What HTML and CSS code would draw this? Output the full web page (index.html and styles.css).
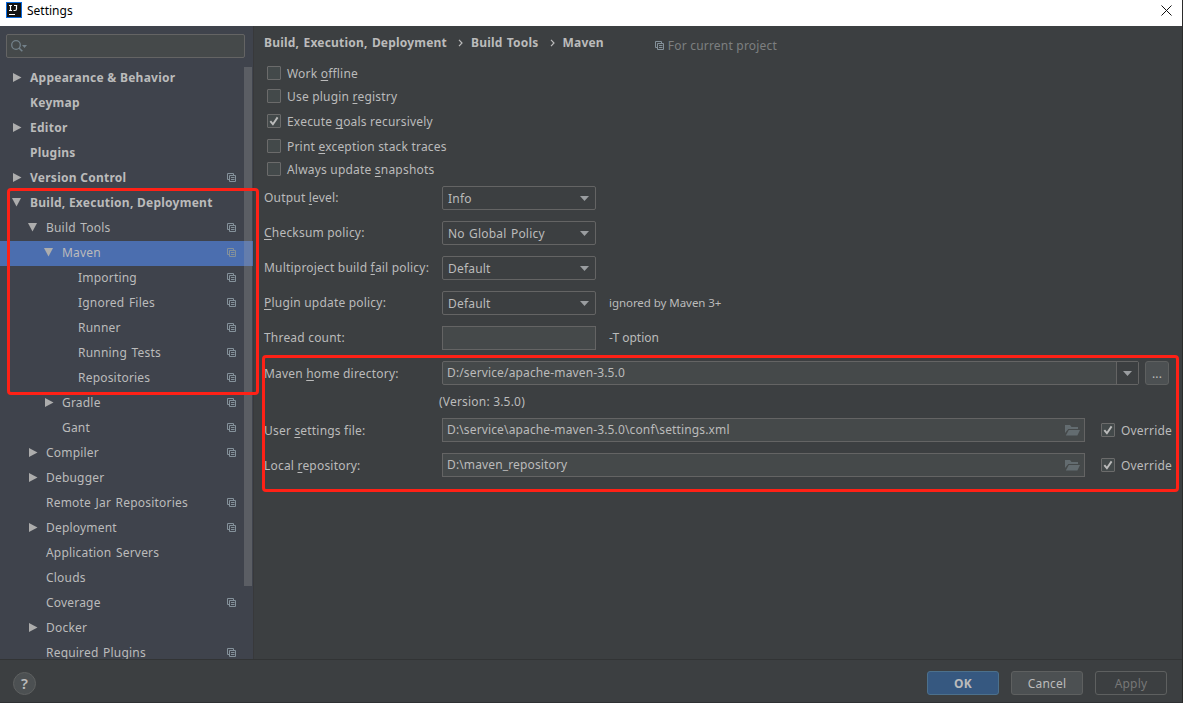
FILE: index.html
```html
<!DOCTYPE html>
<html lang="en">
<head>
<meta charset="utf-8">
<title>Settings</title>
<link rel="stylesheet" href="styles.css">
</head>
<body>
<svg class="defs" width="0" height="0">
  <symbol id="copy" viewBox="0 0 10 10"><path d="M2 6.500H.5V.5h6V2M2.500 2.500h6v6h-6zM4 4.500h3.500M4 6.500h3.500" fill="none" stroke="currentColor"/></symbol>
  <symbol id="right" viewBox="0 0 9 9"><path d="M0 0 8.5 4.5 0 9z" fill="currentColor"/></symbol>
  <symbol id="down" viewBox="0 0 9 9"><path d="M0 0H9L4.5 8.5z" fill="currentColor"/></symbol>
  <symbol id="drop" viewBox="0 0 9 5"><path d="M0 0H9L4.5 5z" fill="currentColor"/></symbol>
  <symbol id="check" viewBox="0 0 14 14"><path d="M3.3 7.2 5.9 10.2 10.6 3.4" fill="none" stroke="currentColor" stroke-width="1.9"/></symbol>
  <symbol id="folder" viewBox="0 0 15 12"><path d="M0 9V1h5l1.500 2H13v2H3.300z" fill="currentColor"/><path d="M3.800 6H15l-2.600 5.500H.8z" fill="currentColor"/></symbol>
</svg>
<div class="window">
  <header class="titlebar">
    <svg class="logo" width="16" height="16" viewBox="0 0 16 16"><rect x=".5" y=".5" width="15" height="15" fill="#111" stroke="#0a6be0"/><path d="M3 3.500h3M4.500 3.500v5M3 8.500h3M8 3.500h3.200M10.500 3.500v3.500q0 1.500-1.500 1.500H7.500M3 12.500h6" fill="none" stroke="#fff" stroke-width="1.200"/></svg>
    <span class="title">Settings</span>
    <svg class="close" width="11" height="11" viewBox="0 0 11 11"><path d="M.5.5l10 10M10.500.5l-10 10" stroke="#111" fill="none"/></svg>
  </header>
  <div class="body">
    <aside class="sidebar">
      <div class="search"><svg width="17" height="14" viewBox="0 0 17 14"><circle cx="5" cy="5" r="4.300" fill="none" stroke="#73818a" stroke-width="1.300"/><path d="M8 8l3.300 3.300" stroke="#73818a" stroke-width="1.600"/><path d="M11 5h5l-2.500 3z" fill="#73818a"/></svg></div>
      <nav class="tree">
        <div class="node top"><svg class="arrow"><use href="#right"/></svg><span>Appearance &amp; Behavior</span></div>
        <div class="node top"><i class="arrow"></i><span>Keymap</span></div>
        <div class="node top"><svg class="arrow"><use href="#right"/></svg><span>Editor</span></div>
        <div class="node top"><i class="arrow"></i><span>Plugins</span></div>
        <div class="node top"><svg class="arrow"><use href="#right"/></svg><span>Version Control</span><svg class="copy"><use href="#copy"/></svg></div>
        <div class="node top"><svg class="arrow open"><use href="#down"/></svg><span>Build, Execution, Deployment</span></div>
        <div class="node l1"><svg class="arrow open"><use href="#down"/></svg><span>Build Tools</span><svg class="copy"><use href="#copy"/></svg></div>
        <div class="node l2 selected"><svg class="arrow open"><use href="#down"/></svg><span>Maven</span><svg class="copy"><use href="#copy"/></svg></div>
        <div class="node l3"><i class="arrow"></i><span>Importing</span><svg class="copy"><use href="#copy"/></svg></div>
        <div class="node l3"><i class="arrow"></i><span>Ignored Files</span><svg class="copy"><use href="#copy"/></svg></div>
        <div class="node l3"><i class="arrow"></i><span>Runner</span><svg class="copy"><use href="#copy"/></svg></div>
        <div class="node l3"><i class="arrow"></i><span>Running Tests</span><svg class="copy"><use href="#copy"/></svg></div>
        <div class="node l3"><i class="arrow"></i><span>Repositories</span><svg class="copy"><use href="#copy"/></svg></div>
        <div class="node l2"><svg class="arrow"><use href="#right"/></svg><span>Gradle</span><svg class="copy"><use href="#copy"/></svg></div>
        <div class="node l2"><i class="arrow"></i><span>Gant</span><svg class="copy"><use href="#copy"/></svg></div>
        <div class="node l1"><svg class="arrow"><use href="#right"/></svg><span>Compiler</span><svg class="copy"><use href="#copy"/></svg></div>
        <div class="node l1"><svg class="arrow"><use href="#right"/></svg><span>Debugger</span></div>
        <div class="node l1"><i class="arrow"></i><span>Remote Jar Repositories</span><svg class="copy"><use href="#copy"/></svg></div>
        <div class="node l1"><svg class="arrow"><use href="#right"/></svg><span>Deployment</span><svg class="copy"><use href="#copy"/></svg></div>
        <div class="node l1"><i class="arrow"></i><span>Application Servers</span></div>
        <div class="node l1"><i class="arrow"></i><span>Clouds</span></div>
        <div class="node l1"><i class="arrow"></i><span>Coverage</span><svg class="copy"><use href="#copy"/></svg></div>
        <div class="node l1"><svg class="arrow"><use href="#right"/></svg><span>Docker</span></div>
        <div class="node l1"><i class="arrow"></i><span>Required Plugins</span><svg class="copy"><use href="#copy"/></svg></div>
      </nav>
      <div class="scrollbar"></div>
    </aside>
    <main class="content">
      <div class="crumbs">
        <b>Build, Execution, Deployment</b><svg class="sep" viewBox="0 0 5 8"><path d="M1 .8 4 4 1 7.200"/></svg><b>Build Tools</b><svg class="sep" viewBox="0 0 5 8"><path d="M1 .8 4 4 1 7.200"/></svg><b>Maven</b>
        <span class="scope"><svg class="copy"><use href="#copy"/></svg>For current project</span>
      </div>
      <div class="checks">
        <label class="option"><i class="box"></i><span>Work <u>o</u>ffline</span></label>
        <label class="option tight"><i class="box"></i><span>Use plugin <u>r</u>egistry</span></label>
        <label class="option loose"><i class="box"><svg><use href="#check"/></svg></i><span>Execute <u>g</u>oals recursively</span></label>
        <label class="option tight"><i class="box"></i><span>Print <u>e</u>xception stack traces</span></label>
        <label class="option"><i class="box"></i><span>Always update <u>s</u>napshots</span></label>
      </div>
      <div class="form">
        <div class="field"><span class="name">Output <u>l</u>evel:</span><div class="combo"><span>Info</span><svg class="drop"><use href="#drop"/></svg></div></div>
        <div class="field"><span class="name"><u>C</u>hecksum policy:</span><div class="combo"><span>No Global Policy</span><svg class="drop"><use href="#drop"/></svg></div></div>
        <div class="field"><span class="name">Multiproject build <u>f</u>ail policy:</span><div class="combo"><span>Default</span><svg class="drop"><use href="#drop"/></svg></div></div>
        <div class="field"><span class="name"><u>P</u>lugin update policy:</span><div class="combo"><span>Default</span><svg class="drop"><use href="#drop"/></svg></div><span class="hint small">ignored by Maven 3+</span></div>
        <div class="field"><span class="name">Thread count:</span><div class="input count"></div><span class="hint">-T option</span></div>
        <div class="field lower"><span class="name">Maven <u>h</u>ome directory:</span><div class="input home"><span>D:/service/apache-maven-3.5.0</span><div class="toggle"><svg class="drop"><use href="#drop"/></svg></div></div><div class="more">...</div></div>
        <div class="version">(Version: 3.5.0)</div>
        <div class="field lower"><span class="name">User <u>s</u>ettings file:</span><div class="input path"><span>D:\service\apache-maven-3.5.0\conf\settings.xml</span><svg class="folder"><use href="#folder"/></svg></div><label class="option override"><i class="box"><svg><use href="#check"/></svg></i><span>Override</span></label></div>
        <div class="field lower"><span class="name">Local <u>r</u>epository:</span><div class="input path"><span>D:\maven_repository</span><svg class="folder"><use href="#folder"/></svg></div><label class="option override"><i class="box"><svg><use href="#check"/></svg></i><span>Override</span></label></div>
      </div>
    </main>
  </div>
  <footer class="footer">
    <div class="help">?</div>
    <div class="buttons"><div class="btn primary">OK</div><div class="btn">Cancel</div><div class="btn disabled">Apply</div></div>
  </footer>
  <div class="mark mark-tree"></div>
  <div class="mark mark-paths"></div>
</div>
</body>
</html>
```
FILE: styles.css
```css
* { box-sizing: border-box; }
body { margin: 0; font: 12px/18px "Noto Sans", sans-serif; letter-spacing: .2px; color: #bbbbbb; background: #3c3f41; }
svg { display: block; flex: none; }
b { font-weight: 700; letter-spacing: .2px; word-spacing: 1px; }
.defs { position: absolute; }
u { text-decoration-thickness: 1px; text-underline-offset: 2px; text-decoration-skip-ink: none; }
.window { position: relative; width: 1183px; height: 703px; overflow: hidden; display: flex; flex-direction: column; border-right: 1px solid #2b2b2b; border-bottom: 1px solid #2f3133; white-space: nowrap; }
.titlebar { height: 26px; flex: none; display: flex; align-items: flex-start; margin-right: -1px; padding: 2px 11px 0 6px; background: #fff; color: #000; letter-spacing: 0; }
.title { margin-left: 5px; flex: 1; }
.close { margin-top: 3px; }
.body { flex: none; height: 633px; display: flex; }
.sidebar { position: relative; width: 254px; flex: none; background: #3f434c; border-right: 1px solid #38393b; padding-top: 8px; overflow: hidden; }
.search { width: 239px; height: 24px; margin: 0 0 8px 6px; padding: 5px 4px; border: 1px solid #646464; border-radius: 2px; background: #45494a; }
.node { height: 25px; padding: 0 16px 2px 13px; display: flex; align-items: center; word-spacing: 1.200px; }
.node span { flex: 1; }
.node .copy { margin-bottom: -1px; }
.arrow { width: 9px; height: 9px; margin-right: 8px; color: #adadad; }
.open { margin: 0 9px 0 -1px; }
.top { font-weight: 700; letter-spacing: .26px; word-spacing: 0; }
.l1 { padding-left: 29px; }
.l2 { padding-left: 45px; }
.l3 { padding-left: 61px; }
.selected { background: #4b6eaf; }
.copy { width: 10px; height: 10px; color: #84919a; }
.scrollbar { position: absolute; left: 244px; top: 41px; width: 8px; height: 519px; background: rgba(166,166,166,.28); }
.content { flex: 1; padding: 8px 0 0 10px; }
.crumbs { display: flex; height: 19px; }
.sep { width: 5px; height: 8px; margin: 5px 8px 0 11px; fill: none; stroke: #bbb; stroke-width: 1.200; }
.scope { display: flex; align-items: center; height: 18px; margin: 3px 0 0 51px; gap: 3px; color: #7d7f80; }
.checks { padding: 8px 0 0 3px; }
.option { display: flex; align-items: center; height: 24px; }
.tight { height: 22px; }
.loose { height: 28px; }
.option span { margin: 1px 0 0 6px; }
.box { width: 14px; height: 14px; border: 1px solid #6b6b6b; border-radius: 1px; background: #43494a; }
.box svg { width: 14px; height: 14px; margin: -1px; color: #bbb; }
.form { padding-top: 5px; }
.field { height: 24px; margin-bottom: 11px; display: flex; align-items: center; }
.name { width: 178px; }
.lower .name { padding-top: 2px; }
.combo, .input { height: 24px; border: 1px solid #646464; display: flex; align-items: center; justify-content: space-between; }
.combo { width: 154px; padding: 1px 6px 0 5px; border-radius: 2px; word-spacing: 1px; }
.drop { width: 9px; height: 5px; color: #9a9da0; }
.input { background: #45494a; padding-left: 4px; letter-spacing: .14px; }
.count { width: 154px; }
.home { width: 697px; border-radius: 2px; }
.toggle { width: 22px; height: 22px; display: flex; align-items: center; justify-content: center; background: #3c3f41; border-left: 1px solid #646464; }
.more { width: 24px; height: 24px; margin-left: 6px; text-align: center; line-height: 23px; background: #4c5052; border: 1px solid #5e6060; border-radius: 3px; }
.hint { margin-left: 13px; letter-spacing: 0; }
.small { font-size: 11.500px; letter-spacing: -.050px; }
.version { height: 22px; line-height: 11px; padding-left: 175px; }
.path { width: 643px; padding-right: 4px; }
.folder { width: 15px; height: 12px; color: #636c70; }
.override { margin-left: 16px; }
.footer { flex: 1; display: flex; justify-content: space-between; padding: 11px 15px 0 13px; border-top: 1px solid #323435; }
.help { width: 23px; height: 23px; margin-top: 1px; border-radius: 50%; border: 1px solid #5e6060; background: #4c5052; text-align: center; font: 600 15px/21px "Noto Sans", sans-serif; }
.buttons { display: flex; gap: 12px; }
.btn { width: 72px; height: 24px; line-height: 24px; text-align: center; border: 1px solid #5e6060; border-radius: 3px; background: #4c5052; }
.primary { background: #365880; border-color: #4c708c; font-weight: 700; }
.disabled { background: transparent; color: #777; }
.mark { position: absolute; border: 3px solid #ff2116; border-radius: 4px; }
.mark-tree { left: 7px; top: 188px; width: 252px; height: 207px; }
.mark-paths { left: 262px; top: 355px; width: 917px; height: 137px; }
```
